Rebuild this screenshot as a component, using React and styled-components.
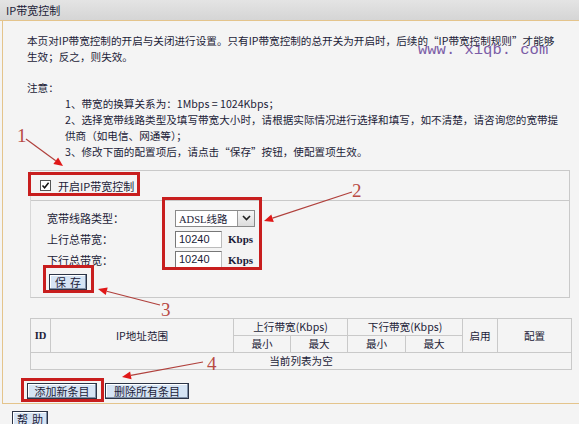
import React from 'react';
import styled, { createGlobalStyle } from 'styled-components';

const TAN = '#e4c48c';
const INK = '#1c1c38';
const GRID = '#c9c9c9';
const MARK = '#c81e1e';

const GlobalStyle = createGlobalStyle`
  body {
    margin: 0;
    background: #f4f4f4;
    font-family: "Noto Sans CJK SC", "Noto Sans", sans-serif;
    font-size: 10.6px;
    color: ${INK};
  }
`

const Page = styled.div`
  position: relative;
  width: 579px;
  height: 424px;
  overflow: hidden;
  background: #f4f4f4;
`

const Header = styled.div`
  height: 20px;
  line-height: 20px;
  padding-left: 6px;
  font-size: 11px;
  background: linear-gradient(#e4e4e4, #d5d5d5);
  border-bottom: 1px solid ${TAN};
`

const Body = styled.div`
  margin-left: 2px;
  height: 383px;
  box-sizing: border-box;
  border-left: 1px solid ${TAN};
  border-bottom: 1px solid ${TAN};
  padding: 12px 0 0 24px;
`

const Lines = styled.div`
  line-height: 16px;
  white-space: nowrap;
  padding-left: ${p => p.$indent || 0}px;
  margin-top: ${p => p.$top || 0}px;
`

const Fieldset = styled.div`
  margin: 10px 0 0 3px;
  width: 540px;
  height: 128px;
  box-sizing: border-box;
  border: 1px solid ${GRID};
  border-left-color: #d8d8d8;
`

const SwitchRow = styled.div`
  height: 29px;
  display: flex;
  align-items: center;
  gap: 7px;
  padding-left: 9px;
  font-size: 11px;
  border-bottom: 1px solid ${GRID};
`

const Check = styled.span`
  width: 11px;
  height: 11px;
  box-sizing: border-box;
  border: 1px solid #555;
  background: #fff;
  display: flex;
  align-items: center;
  justify-content: center;
`

const Panel = styled.div`
  padding: 6px 0 0 16px;
`

const Form = styled.div`
  display: grid;
  grid-template-columns: 128px auto;
  grid-template-rows: 22px 20px 21px;
  align-items: center;
  font-size: 11px;
`

const Control = styled.div`
  display: flex;
  align-items: center;
  gap: 6px;
`

const Select = styled.div`
  width: 80px;
  height: 17px;
  box-sizing: border-box;
  border: 1px solid #8a8a8a;
  background: #fff;
  display: flex;
  align-items: center;
  justify-content: space-between;
  padding-left: 3px;
  font-family: "Liberation Serif", "Noto Sans CJK SC", serif;
  font-size: 10.5px;
`

const Drop = styled.span`
  width: 16px;
  height: 15px;
  border-left: 1px solid #999;
  background: linear-gradient(#f6f6f6, #dcdcdc);
  display: flex;
  align-items: center;
  justify-content: center;
`

const Input = styled.div`
  width: 47px;
  height: 17px;
  box-sizing: border-box;
  border: 1px solid #777;
  border-right-color: #bbb;
  border-bottom-color: #bbb;
  background: #fff;
  padding-left: 3px;
  line-height: 15px;
  font-family: "Liberation Sans", sans-serif;
  font-size: 11px;
`

const Unit = styled.span`
  font-family: "Liberation Serif", serif;
  font-weight: bold;
  font-size: 11px;
`

const Button = styled.button`
  width: ${p => p.$w}px;
  height: ${p => p.$h || 16}px;
  padding: 0;
  border: 1px solid #2c3446;
  box-shadow: inset -1px -1px 0 #8090a8, inset 1px 1px 0 #fff;
  background: #d6e4f4;
  color: ${INK};
  font-family: "Noto Sans CJK SC", sans-serif;
  font-size: 11px;
  line-height: 14px;
  letter-spacing: ${p => p.$spread || 0}px;
  text-indent: ${p => p.$spread || 0}px;
`

const SaveRow = styled.div`
  margin-top: 4px;
  padding-left: 2px;
`

const Table = styled.table`
  margin: 20px 0 0 3px;
  width: 541px;
  border-collapse: collapse;
  table-layout: fixed;
  border: 1px solid ${GRID};
  & td {
    border: 1px solid ${GRID};
    text-align: center;
    padding: 0;
    height: 16px;
    line-height: 14px;
  }
`

const IdCell = styled.td`
  font-family: "Liberation Serif", serif;
  font-weight: bold;
  font-size: 10.5px;
`

const Actions = styled.div`
  margin-top: 13px;
  display: flex;
  gap: 8px;
`

const Footer = styled.div`
  padding: 7px 0 0 12px;
`

const Watermark = styled.div`
  position: absolute;
  left: 418px;
  top: 42px;
  font-family: "Liberation Mono", monospace;
  font-size: 15.5px;
  line-height: 16px;
  color: #7b5ca6;
  white-space: pre;
  pointer-events: none;
`

const RedBox = styled.div`
  position: absolute;
  left: ${p => p.$x}px;
  top: ${p => p.$y}px;
  width: ${p => p.$w}px;
  height: ${p => p.$h}px;
  box-sizing: border-box;
  border: 3px solid ${MARK};
  pointer-events: none;
`

const Overlay = styled.svg`
  position: absolute;
  left: 0;
  top: 0;
  pointer-events: none;
`

const arrows = [
  { n: '1', tx: 17, ty: 142, from: [26, 139], to: [63, 166] },
  { n: '2', tx: 352, ty: 197, from: [352, 192], to: [264, 221] },
  { n: '3', tx: 161, ty: 316, from: [160, 305], to: [98, 289] },
  { n: '4', tx: 207, ty: 370, from: [203, 362], to: [122, 377] },
];

function Arrow({ n, tx, ty, from, to }) {
  const [x1, y1] = from;
  const [x2, y2] = to;
  const a = Math.atan2(y2 - y1, x2 - x1);
  const len = 9, wid = 4;
  const bx = x2 - len * Math.cos(a), by = y2 - len * Math.sin(a);
  const p1 = `${bx + wid * Math.sin(a)},${by - wid * Math.cos(a)}`;
  const p2 = `${bx - wid * Math.sin(a)},${by + wid * Math.cos(a)}`;
  return (
    <g>
      <line x1={x1} y1={y1} x2={bx} y2={by} stroke="#b0403c" strokeWidth="1.2" />
      <polygon points={`${x2},${y2} ${p1} ${p2}`} fill="#e01818" />
      <text x={tx} y={ty} fill="#b84a44" fontFamily="Liberation Serif, serif" fontSize="19">{n}</text>
    </g>
  );
}

export default function App() {
  return (
    <Page>
      <GlobalStyle />
      <Header>IP带宽控制</Header>
      <Body>
        <Lines>
          本页对IP带宽控制的开启与关闭进行设置。只有IP带宽控制的总开关为开启时，后续的“IP带宽控制规则”才能够<br />
          生效；反之，则失效。
        </Lines>
        <Lines $top={15}>注意：</Lines>
        <Lines $indent={38}>
          1、带宽的换算关系为：1Mbps = 1024Kbps；<br />
          2、选择宽带线路类型及填写带宽大小时，请根据实际情况进行选择和填写，如不清楚，请咨询您的宽带提<br />
          供商（如电信、网通等）；<br />
          3、修改下面的配置项后，请点击“保存”按钮，使配置项生效。
        </Lines>
        <Fieldset>
          <SwitchRow>
            <Check>
              <svg width="9" height="9" viewBox="0 0 9 9">
                <path d="M1.5 4.5 L3.6 6.8 L7.6 1.8" fill="none" stroke="#111" strokeWidth="1.5" />
              </svg>
            </Check>
            开启IP带宽控制
          </SwitchRow>
          <Panel>
            <Form>
              <span>宽带线路类型：</span>
              <Control>
                <Select>
                  ADSL线路
                  <Drop>
                    <svg width="9" height="6" viewBox="0 0 9 6">
                      <path d="M1 1 L4.5 4.6 L8 1" fill="none" stroke="#222" strokeWidth="1.6" />
                    </svg>
                  </Drop>
                </Select>
              </Control>
              <span>上行总带宽：</span>
              <Control>
                <Input>10240</Input>
                <Unit>Kbps</Unit>
              </Control>
              <span>下行总带宽：</span>
              <Control>
                <Input>10240</Input>
                <Unit>Kbps</Unit>
              </Control>
            </Form>
            <SaveRow>
              <Button $w={38} $spread={4}>保存</Button>
            </SaveRow>
          </Panel>
        </Fieldset>
        <Table>
          <colgroup>
            <col style={{ width: 20 }} />
            <col style={{ width: 183 }} />
            <col style={{ width: 57 }} />
            <col style={{ width: 57 }} />
            <col style={{ width: 58 }} />
            <col style={{ width: 57 }} />
            <col style={{ width: 35 }} />
            <col style={{ width: 74 }} />
          </colgroup>
          <tbody>
            <tr>
              <IdCell rowSpan={2}>ID</IdCell>
              <td rowSpan={2}>IP地址范围</td>
              <td colSpan={2}>上行带宽(Kbps)</td>
              <td colSpan={2}>下行带宽(Kbps)</td>
              <td rowSpan={2}>启用</td>
              <td rowSpan={2}>配置</td>
            </tr>
            <tr>
              <td>最小</td>
              <td>最大</td>
              <td>最小</td>
              <td>最大</td>
            </tr>
            <tr>
              <td colSpan={8}>当前列表为空</td>
            </tr>
          </tbody>
        </Table>
        <Actions>
          <Button $w={70}>添加新条目</Button>
          <Button $w={84}>删除所有条目</Button>
        </Actions>
      </Body>
      <Footer>
        <Button $w={36} $spread={4}>帮助</Button>
      </Footer>
      <Watermark>www. xiqb. com</Watermark>
      <RedBox $x={28} $y={172} $w={112} $h={24} />
      <RedBox $x={162} $y={197} $w={100} $h={73} />
      <RedBox $x={43} $y={265} $w={51} $h={28} />
      <RedBox $x={21} $y={378} $w={83} $h={24} />
      <Overlay width="579" height="424">
        {arrows.map(a => <Arrow key={a.n} {...a} />)}
      </Overlay>
    </Page>
  );
}
